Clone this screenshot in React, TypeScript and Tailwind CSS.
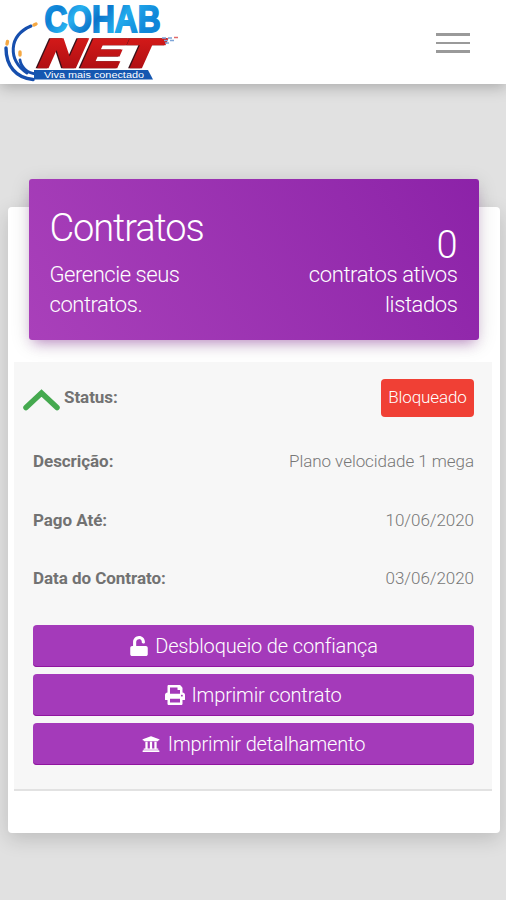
import React from "react";
import { FaPrint, FaUniversity, FaUnlock } from "react-icons/fa";

const details = [
  { label: "Descrição:", value: "Plano velocidade 1 mega", height: "h-[58px]" },
  { label: "Pago Até:", value: "10/06/2020", height: "h-[59px]" },
  { label: "Data do Contrato:", value: "03/06/2020", height: "h-[58px]" },
];

const Logo: React.FC = () => (
  <svg className="block" width="184" height="84" viewBox="0 0 184 84" role="img" aria-label="Cohab Net">
    <defs>
      <linearGradient id="blue" x1="0" y1="0" x2="1" y2="0.3">
        <stop offset="0" stopColor="#1fa5ea" />
        <stop offset="0.18" stopColor="#0d7fd4" />
        <stop offset="0.35" stopColor="#27b0ef" />
        <stop offset="0.55" stopColor="#0b74ca" />
        <stop offset="0.75" stopColor="#22aaec" />
        <stop offset="1" stopColor="#0f86d8" />
      </linearGradient>
      <linearGradient id="red" x1="0" y1="0" x2="0" y2="1">
        <stop offset="0" stopColor="#dc1c1a" />
        <stop offset="1" stopColor="#a80d12" />
      </linearGradient>
    </defs>

    {/* cables */}
    <g fill="none" stroke="#164fae" strokeLinecap="round">
      <path d="M31 26C8 36 8 60 27 73" strokeWidth="3" />
      <path d="M6 48C6 66 16 78 33 79.500" strokeWidth="3.4" />
      <path d="M20 60C21 67 27 73 36 74" strokeWidth="2.8" />
    </g>
    <g stroke="#f5a843" strokeWidth="3.400" strokeLinecap="round">
      <path d="M34 25l2-1M7 44l.5-2.500M20 55v-3" />
    </g>

    <text x="44.500" y="32" textLength="116" lengthAdjust="spacingAndGlyphs" fontFamily="'Liberation Sans', sans-serif" fontWeight="700" fontSize="36" fill="url(#blue)" stroke="url(#blue)" strokeWidth="1.800">
      COHAB
    </text>
    <g transform="translate(38 66.500) skewX(-9)">
      <text x="-1" y="0" textLength="119" lengthAdjust="spacingAndGlyphs" fontFamily="'Liberation Sans', sans-serif" fontWeight="700" fontStyle="italic" fontSize="40" fill="#3b1018" stroke="#3b1018" strokeWidth="2.500">
        NET
      </text>
      <text x="0.5" y="0" textLength="119" lengthAdjust="spacingAndGlyphs" fontFamily="'Liberation Sans', sans-serif" fontWeight="700" fontStyle="italic" fontSize="40" fill="url(#red)" stroke="url(#red)" strokeWidth="2.500">
        NET
      </text>
    </g>
    <path d="M162 38h12M164 40.500h11M165 43h5" stroke="#7da5d8" strokeWidth="1.4" strokeDasharray="4 2" />
    <path d="M174 37.5h4" stroke="#e06a6a" strokeWidth="1.5" />

    <path d="M34 70h114l5 9.500H34z" fill="#1557b0" />
    <text x="44" y="77.500" textLength="100" lengthAdjust="spacingAndGlyphs" fontFamily="'Liberation Sans', sans-serif" fontSize="8.500" fill="#fff">
      Viva mais conectado
    </text>
  </svg>
);

type ActionProps = { icon: React.ReactNode; children: React.ReactNode };

const ActionButton: React.FC<ActionProps> = ({ icon, children }) => (
  <button className="flex h-[42px] w-full items-center justify-center gap-1.5 rounded bg-[#a43aba] text-xl leading-none font-light tracking-[-0.15px] text-white shadow-[inset_0_-1px_0_#8f159f]">
    {icon}
    <span>{children}</span>
  </button>
);

export default function App() {
  return (
    <div className="flex min-h-[900px] w-full flex-col bg-[#e1e1e1] font-['Roboto',sans-serif]">
      {/* Navbar */}
      <header className="flex h-[84px] items-start justify-between bg-white pr-9 shadow-[0_3px_14px_rgba(0,0,0,0.25)]">
        <Logo />
        <button className="mt-[33px] flex w-[34px] flex-col gap-[6px]" aria-label="Menu">
          <span className="h-[2.500px] w-full bg-[#9a9a9a]" />
          <span className="h-[2.500px] w-full bg-[#9a9a9a]" />
          <span className="h-[2.500px] w-full bg-[#9a9a9a]" />
        </button>
      </header>

      {/* Contracts card */}
      <main className="mt-[123px] mr-[6px] ml-[7.500px] h-[626px] rounded bg-white pr-2 pl-[6.500px] shadow-[0_6px_20px_rgba(0,0,0,0.16)]">
        <div className="-mt-7 mr-[13.500px] ml-[14.500px] flex h-[161px] justify-between rounded-[3px] bg-linear-60 from-[#a940ba] to-[#8c22a8] px-[21px] font-light text-white shadow-[0_4px_20px_rgba(0,0,0,0.14),0_7px_12px_-5px_rgba(156,39,176,0.46)]">
          <div className="w-[160px] pt-[26px]">
            <h1 className="text-[38px] leading-[46px] font-light tracking-[-1.100px]">Contratos</h1>
            <p className="mt-[9px] text-[22px] leading-[30px] tracking-[-0.450px]">Gerencie seus contratos.</p>
          </div>
          <div className="w-[170px] pt-[47px] text-right">
            <div className="text-[38px] leading-[38px]">0</div>
            <p className="-mt-1 text-[22px] leading-[30px] tracking-[-0.400px]">contratos ativos listados</p>
          </div>
        </div>

        <section className="mt-[22px] h-[429px] border-b-2 border-[#e2e2e2] bg-[#f7f7f7] pr-[18px] pl-[19px]">
          <div className="-ml-[10px] flex h-[71px] items-center">
            <svg className="mt-1" width="37" height="24" viewBox="0 0 37 24" fill="none">
              <path d="M3 19.500L18.500 5l15.500 14.500" stroke="#45a94f" strokeWidth="5.500" strokeLinecap="round" />
            </svg>
            <span className="ml-[4px] text-[17px] font-bold tracking-[-0.050px] text-[#727272]">Status:</span>
            <span className="ml-auto flex h-[38px] w-[93px] items-center justify-center rounded bg-[#f04035] text-[17px] font-light tracking-[-0.100px] text-white">
              Bloqueado
            </span>
          </div>
          {details.map(({ label, value, height }) => (
            <div key={label} className={`flex items-center justify-between text-[17px] tracking-[-0.050px] ${height}`}>
              <span className="font-bold text-[#727272]">{label}</span>
              <span className="font-light text-[#777]">{value}</span>
            </div>
          ))}

          <div className="mt-[17px] flex flex-col gap-[7px]">
            <ActionButton icon={<FaUnlock className="size-5" />}>Desbloqueio de confiança</ActionButton>
            <ActionButton icon={<FaPrint className="size-5" />}>Imprimir contrato</ActionButton>
            <ActionButton icon={<FaUniversity className="mr-[2px] size-[18px]" />}>Imprimir detalhamento</ActionButton>
          </div>
        </section>
      </main>
    </div>
  );
}
